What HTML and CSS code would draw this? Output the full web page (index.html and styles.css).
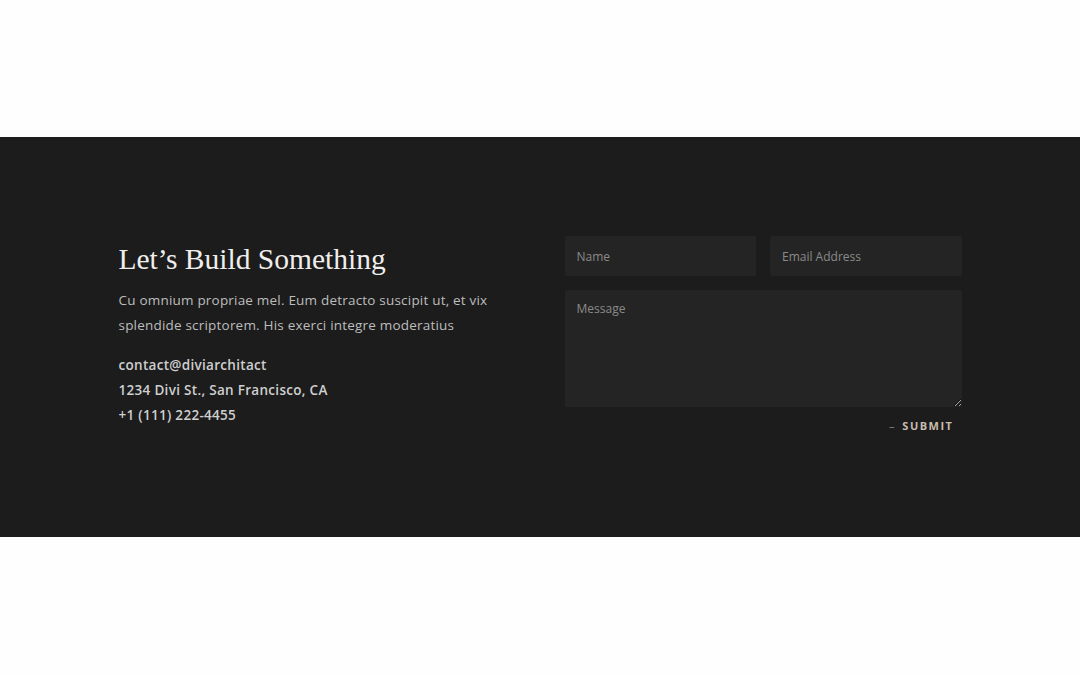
FILE: index.html
```
<!DOCTYPE html>
<html>
<head>
    <title>Contact</title>
    <link rel="stylesheet" href="styles.css">
</head>
<body>
    <div class="spacer-top"></div>
    <section class="contact">
        <div class="contact-inner">
            <div class="contact-info">
                <h1>Let’s Build Something</h1>
                <p class="intro">Cu omnium propriae mel. Eum detracto suscipit ut, et vix splendide scriptorem. His exerci integre moderatius</p>
                <p class="details">
                    contact@diviarchitact<br>
                    1234 Divi St., San Francisco, CA<br>
                    +1 (111) 222-4455
                </p>
            </div>
            <form class="contact-form">
                <div class="row">
                    <input type="text" placeholder="Name">
                    <input type="text" placeholder="Email Address">
                </div>
                <textarea placeholder="Message"></textarea>
                <div class="actions">
                    <button type="submit"><span class="dash">–</span> Submit</button>
                </div>
            </form>
        </div>
    </section>
</body>
</html>
```

FILE: styles.css
```
body {
    margin: 0;
    background-color: #fefefe;
    font-family: "Open Sans", "Lato", sans-serif;
}

.spacer-top {
    height: 137px;
}

.contact {
    box-sizing: border-box;
    background-color: #1c1c1c;
    height: 400px;
    padding-top: 99px;
}

.contact-inner {
    width: 843px;
    margin: 0 auto;
    display: grid;
    grid-template-columns: 397px 397px;
    column-gap: 49px;
    align-items: start;
}

.contact-info {
    padding-top: 5px;
}

.contact-info h1 {
    font-family: "Liberation Serif", serif;
    font-weight: normal;
    font-size: 29.5px;
    color: #f0eeec;
    margin: 0 0 11px 0;
    line-height: 36px;
}

.intro {
    margin: 0 0 15px 0;
    font-size: 13.5px;
    letter-spacing: 0.2px;
    line-height: 25px;
    color: #bdbdbd;
    width: 395px;
}

.details {
    margin: 0;
    font-size: 13.5px;
    letter-spacing: 0.3px;
    line-height: 25px;
    font-weight: 600;
    color: #cfcfcf;
}

.contact-form {
    margin: 0;
}

.row {
    display: flex;
    gap: 14px;
    margin-bottom: 14px;
}

input[type="text"], textarea {
    box-sizing: border-box;
    background-color: #242424;
    border: none;
    border-radius: 2px;
    color: #ccc;
    font-family: "Open Sans", sans-serif;
    font-size: 12px;
    padding: 0 12px;
    outline: none;
}

input[type="text"] {
    flex: 1;
    min-width: 0;
    height: 40px;
}

textarea {
    display: block;
    width: 100%;
    height: 117px;
    padding-top: 10px;
    resize: vertical;
}

::placeholder {
    color: #8a8a8a;
}

.actions {
    display: flex;
    justify-content: flex-end;
    padding: 11px 8px 0 0;
}

button {
    background: none;
    border: none;
    padding: 0;
    cursor: pointer;
    font-family: "Open Sans", sans-serif;
    font-weight: bold;
    font-size: 11px;
    letter-spacing: 1.5px;
    text-transform: uppercase;
    color: #c9bcae;
}

.dash {
    color: #8d8378;
    font-weight: normal;
    margin-right: 2px;
}
```
